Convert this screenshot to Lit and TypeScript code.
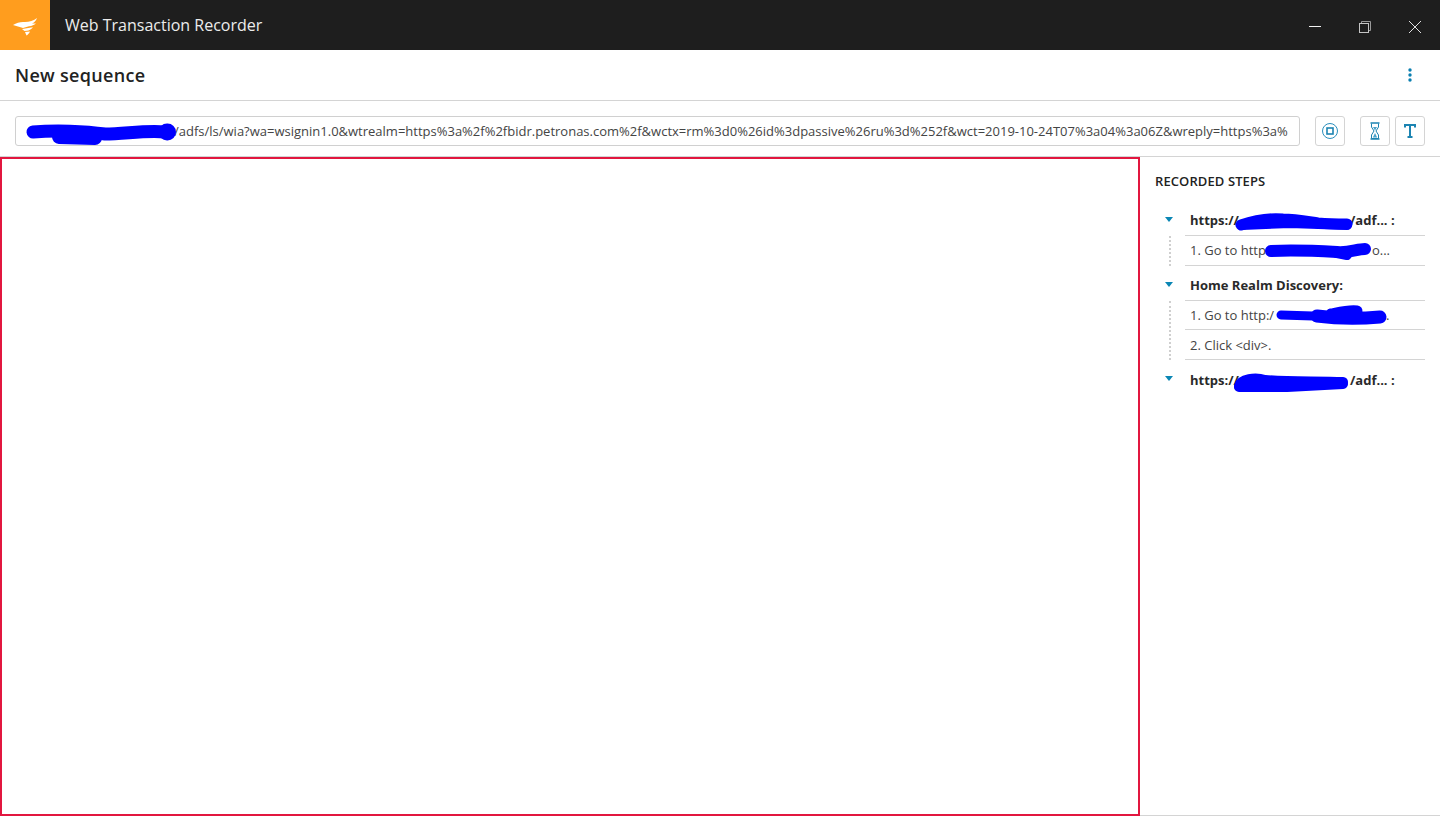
import { LitElement, html, css, svg } from "lit";
import { customElement } from "lit/decorators.js";

const scribble = (cls: string, w: number, h: number, parts: [string, number][]) => html`<svg class="scribble ${cls}" width=${w} height=${h} viewBox="0 0 ${w} ${h}">${parts.map(([d, sw]) => svg`<path d=${d} fill="none" stroke="#0000ff" stroke-width=${sw} stroke-linecap="round" stroke-linejoin="round"/>`)}</svg>`;

@customElement("app-root")
export class AppRoot extends LitElement {
  static styles = css`
    :host { display: flex; flex-direction: column; height: 819px; width: 1440px; overflow: hidden; background: #fff; font-family: "Open Sans", sans-serif; color: #222; }
    * { box-sizing: border-box; }
    .titlebar { height: 50px; flex: none; background: #1e1e1e; display: flex; align-items: center; }
    .logo { width: 50px; height: 50px; padding-top: 3px; background: #ff9d1e; display: flex; align-items: center; justify-content: center; }
    .app-name { margin-left: 15px; font-size: 16px; font-weight: 400; flex: 1; color: #ececec; }
    .win { width: 50px; height: 50px; padding-top: 4px; display: flex; align-items: center; justify-content: center; }
    .head { height: 51px; flex: none; border-bottom: 1px solid #d4d4d4; display: flex; align-items: center; justify-content: space-between; padding: 0 27px 0 15px; }
    .head h1 { margin: 0; font-size: 18px; font-weight: 600; color: #222; letter-spacing: 0.3px; }
    .toolbar { height: 56px; flex: none; border-bottom: 1px solid #d4d4d4; display: flex; align-items: flex-start; padding: 15px 15px 0; }
    .url { position: relative; width: 1285px; height: 30px; border: 1px solid #d0d0d0; border-radius: 3px; display: flex; align-items: center; padding-left: 158px; font-size: 13px; color: #444; white-space: nowrap; }
    .btn { width: 30px; height: 30px; flex: none; border: 1px solid #d4d4d4; border-radius: 3px; display: flex; align-items: center; justify-content: center; background: #fff; }
    .b1 { margin-left: 15px; }
    .b2 { margin-left: 15px; }
    .b3 { margin-left: 5px; }
    .main { height: 659px; flex: none; display: flex; }
    .canvas { width: 1140px; flex: none; border: 2px solid #e2163f; }
    .side { flex: 1; border-bottom: 1px solid #d4d4d4; padding: 16px 15px 0; position: relative; }
    .side h2 { margin: 0 0 18px; font-size: 13px; line-height: 16px; font-weight: 600; color: #222; letter-spacing: 0.1px; }
    .group-head { position: relative; height: 29px; margin-left: 30px; padding: 0 0 2px 5px; border-bottom: 1px solid #d4d4d4; font-size: 13px; font-weight: 700; display: flex; align-items: center; color: #2a2a2a; white-space: nowrap; }
    .group-head.last { border-bottom: none; padding-bottom: 0; }
    .caret { position: absolute; left: -20px; top: 10px; width: 0; height: 0; border-left: 4px solid transparent; border-right: 4px solid transparent; border-top: 5px solid #0a86b4; }
    .children { position: relative; margin-bottom: 6px; }
    .children::before { content: ""; position: absolute; left: 14px; top: 0; bottom: 0; border-left: 2px dotted #cfcfcf; }
    .row { position: relative; margin-left: 30px; height: 29.5px; border-bottom: 1px solid #d4d4d4; font-size: 13px; color: #444; display: flex; align-items: center; padding-left: 5px; white-space: nowrap; }
    .row.low { padding-top: 1px; }
    .scribble { position: absolute; pointer-events: none; top: 0; }
    .s-url { left: 9px; }
    .s-h1 { left: 45px; }
    .s-r1 { left: 74px; }
    .s-r2 { left: 84px; }
    .s-h3 { left: 42px; }
    .tail-h { margin-left: 111px; }
    .tail-r1 { margin-left: 106px; }
    .tail-r2 { margin-left: 112px; }
  `;

  render() {
    return html`
      <div class="titlebar">
        <div class="logo">
          <svg width="24" height="18" viewBox="0 0 24 18"><path d="M0 7 C4 4.500 8 3.500 12 4 C16 4 21 2.500 24 0 C23 3 21 4.500 19 5.500 L23 5.500 C21 7 19 8 16 8.300 L10 10 C7 9 3 8 0 7Z M9 11 L20 9.300 C18 11.500 16 12.500 14 12.800 L11.500 13Z M12 14 L17 13.500 C16 15.500 14.500 17 13.500 17.500Z" fill="#fff"/></svg>
        </div>
        <div class="app-name">Web Transaction Recorder</div>
        <div class="win"><svg width="14" height="14" viewBox="0 0 14 14"><path d="M1 6.500H13" stroke="#f2f2f2" stroke-width="1"/></svg></div>
        <div class="win"><svg width="14" height="14" viewBox="0 0 14 14"><path d="M3.500 3.500V1.500H12.500V10.500H10.500" fill="none" stroke="#9a9a9a"/><rect x="1.500" y="3.500" width="9" height="9" fill="none" stroke="#c4c4c4"/></svg></div>
        <div class="win"><svg width="14" height="14" viewBox="0 0 14 14"><path d="M1 1L13 13M13 1L1 13" stroke="#e0e0e0" stroke-width="1"/></svg></div>
      </div>
      <div class="head">
        <h1>New sequence</h1>
        <svg width="6" height="14" viewBox="0 0 6 14"><g fill="#0a7fb0"><circle cx="3" cy="2" r="1.700"/><circle cx="3" cy="7" r="1.700"/><circle cx="3" cy="12" r="1.700"/></g></svg>
      </div>
      <div class="toolbar">
        <div class="url">
          ${scribble("s-url", 156, 30, [
            ["M8 15 C30 13 60 14 80 17 C100 17 120 13 141 15", 13],
            ["M34 20 L70 21", 14],
            ["M142 15 L142.500 15", 17],
          ])}
          <span>/adfs/ls/wia?wa=wsignin1.0&amp;wtrealm=https%3a%2f%2fbidr.petronas.com%2f&amp;wctx=rm%3d0%26id%3dpassive%26ru%3d%252f&amp;wct=2019-10-24T07%3a04%3a06Z&amp;wreply=https%3a%</span>
        </div>
        <div class="btn b1"><svg width="18" height="18" viewBox="0 0 18 18"><circle cx="9" cy="9" r="7.500" fill="none" stroke="#2a8fbd" stroke-width="1"/><rect x="6" y="6" width="6" height="6" fill="none" stroke="#1c84b2" stroke-width="1.600"/></svg></div>
        <div class="btn b2"><svg width="12" height="18" viewBox="0 0 12 18"><path d="M1.500 1H10.500M1.500 17H10.500" stroke="#1c84b2" stroke-width="1.500"/><path d="M2.500 1.500V5L5 9L2.500 13V16.500H9.500V13L7 9L9.500 5V1.500" fill="none" stroke="#1c84b2"/><path d="M4 5H8L6 8.500ZM6 11L3.800 15.500H8.200Z" fill="#4ba3cb"/></svg></div>
        <div class="btn b3"><svg width="12" height="14" viewBox="0 0 12 14"><path d="M1 3.500V1H11V3.500M6 1V13M3.500 13H8.500" fill="none" stroke="#1c84b2" stroke-width="2"/></svg></div>
      </div>
      <div class="main">
        <div class="canvas"></div>
        <div class="side">
          <h2>RECORDED STEPS</h2>
          <div class="group-head"><span class="caret"></span>https://${scribble("s-h1", 130, 28, [["M11 18 C25 13 40 11 53 12 C65 12 75 14 88 16 C100 17 110 17 117 17", 11], ["M12 18 L60 16 L117 18", 10]])}<span class="tail-h">/adf... :</span></div>
          <div class="children">
            <div class="row">1. Go to http${scribble("s-r1", 124, 28, [["M12 15 C30 14 60 15 78 16 C90 17 98 13 106 13", 12], ["M78 17 L88 19", 10]])}<span class="tail-r1">o...</span></div>
          </div>
          <div class="group-head"><span class="caret"></span>Home Realm Discovery:</div>
          <div class="children">
            <div class="row">1. Go to http:/${scribble("s-r2", 122, 28, [["M12 14 L44 15", 9], ["M48 15 C70 18 90 18 111 16", 13], ["M62 13 C72 11 80 9 88 10", 11]])}<span class="tail-r2">.</span></div>
            <div class="row low">2. Click &lt;div&gt;.</div>
          </div>
          <div class="group-head last"><span class="caret"></span>https://${scribble("s-h3", 128, 30, [["M12 20 C14 13 28 11 38 14 C60 16 90 15 116 16", 10], ["M12 21 L60 21 L116 18", 10]])}<span class="tail-h">/adf... :</span></div>
        </div>
      </div>
    `;
  }
}
